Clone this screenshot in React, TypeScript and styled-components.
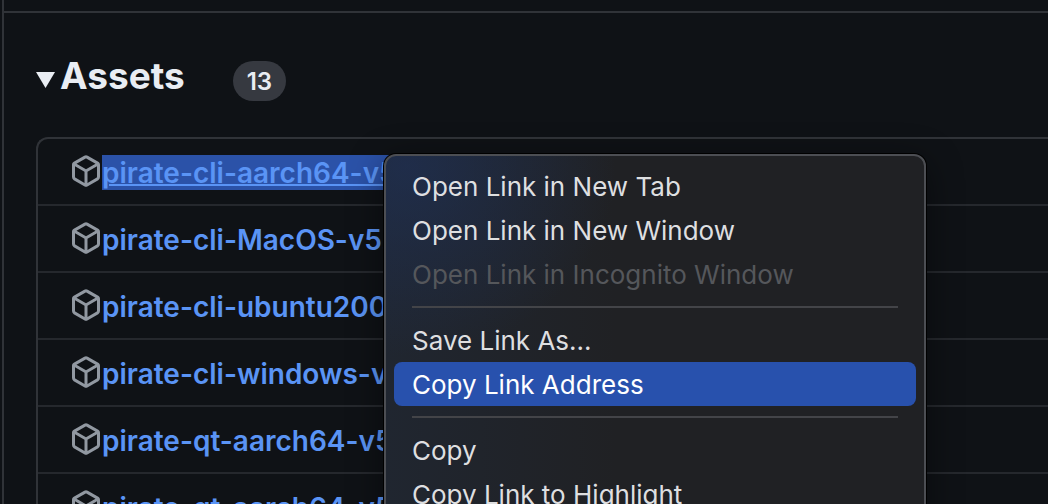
import React from "react";
import styled, { createGlobalStyle } from "styled-components";

const sans = `Inter, "Liberation Sans", sans-serif`;

const GlobalStyle = createGlobalStyle`
  *, *::before, *::after { box-sizing: border-box; }
  html, body { margin: 0; background: #0f1216; }
  body { font-family: ${sans}; overflow: hidden; }
`;

const Page = styled.main`
  position: relative;
  height: 100vh;
  overflow: hidden;
  padding-left: 2px;
  background: #0f1216;
`;

const ReleaseCard = styled.section`
  min-height: 100%;
  border-left: 2px solid #303338;
  padding-top: 11px;
`;

const CardFooter = styled.div`
  border-top: 2px solid #303338;
  padding: 39px 0 0 32px;
`;

const AssetsHeader = styled.header`
  display: flex;
  align-items: center;
  height: 48px;
  margin-bottom: 37px;
`;

const Disclosure = styled.button`
  display: flex;
  align-items: center;
  gap: 5px;
  padding: 0;
  border: 0;
  background: none;
  color: #e9edf3;
  font: inherit;
`;

const Heading = styled.h2`
  margin: 0;
  font-size: 37px;
  font-weight: 700;
  line-height: 48px;
`;

const Triangle = styled.svg`
  display: block;
  width: 19px;
  height: 16px;
  margin-top: 8px;
`;

const Counter = styled.span`
  margin: 10px 0 0 48px;
  padding: 1px 14px 0;
  border-radius: 20px;
  background: #363940;
  color: #e9edf3;
  font-size: 24px;
  font-weight: 600;
  line-height: 39px;
`;

const AssetList = styled.ul`
  margin: 0;
  padding: 0;
  list-style: none;
  border: 2px solid #303338;
  border-right: 0;
  border-radius: 12px 0 0 12px;
`;

const AssetRow = styled.li`
  display: flex;
  align-items: flex-start;
  height: 67px;
  padding: 16px 0 0 32px;
  border-bottom: 2px solid #25282d;
`;

const PackageIcon = styled.svg`
  flex: none;
  width: 32px;
  height: 32px;
  fill: #9198a1;
`;

const AssetLink = styled.a<{ $selected?: boolean }>`
  padding-top: 2px;
  color: #5a94f5;
  font-size: 28px;
  font-weight: 600;
  line-height: 33px;
  white-space: nowrap;
  background: ${(p) => (p.$selected ? "#2b52a8" : "none")};
  text-decoration: ${(p) => (p.$selected ? "underline" : "none")};
  text-decoration-thickness: 2px;
`;

const Menu = styled.div`
  position: absolute;
  top: 154px;
  left: 384px;
  right: 122px;
  padding: 8px;
  border: 2px solid #4c4e53;
  border-radius: 12px;
  background:
    radial-gradient(ellipse 210px 190px at 20px 10px, rgba(31, 49, 88, 0.65), rgba(31, 49, 88, 0)),
    linear-gradient(90deg, #202630, #202124 230px);
  background-color: #202124;
  box-shadow: 0 0 0 1px #000, 0 8px 36px rgba(0, 0, 0, 0.45);
`;

const MenuItem = styled.button<{ $active?: boolean }>`
  display: block;
  width: 100%;
  height: 44px;
  padding: 2px 18px 0;
  border: 0;
  border-radius: 8px;
  background: ${(p) => (p.$active ? "#2851ad" : "none")};
  color: ${(p) => (p.$active ? "#ffffff" : "#dedfe0")};
  font-family: ${sans};
  font-size: 26px;
  line-height: 42px;
  text-align: left;
  white-space: nowrap;

  &:disabled { color: #55575b; }
`;

const Separator = styled.hr`
  height: 2px;
  margin: 10px 18px;
  border: 0;
  background: #434448;
`;

const assets = [
  "pirate-cli-aarch64-v5.",
  "pirate-cli-MacOS-v5.",
  "pirate-cli-ubuntu200",
  "pirate-cli-windows-v5",
  "pirate-qt-aarch64-v5",
  "pirate-qt-aarch64-v5",
];

function Package() {
  return (
    <PackageIcon viewBox="0 0 16 16" aria-hidden="true">
      <path d="m8.878.392 5.25 3.045c.54.314.872.89.872 1.514v6.098a1.75 1.75 0 0 1-.872 1.514l-5.25 3.045a1.75 1.75 0 0 1-1.756 0l-5.25-3.045A1.75 1.75 0 0 1 1 11.049V4.951c0-.624.332-1.201.872-1.514L7.122.392a1.75 1.75 0 0 1 1.756 0ZM7.875 1.69l-4.63 2.685L8 7.133l4.755-2.758-4.63-2.685a.248.248 0 0 0-.25 0ZM2.5 5.677v5.372c0 .09.047.171.125.216l4.625 2.683V8.432Zm6.25 8.271 4.625-2.683a.25.25 0 0 0 .125-.216V5.677L8.75 8.432Z" />
    </PackageIcon>
  );
}

export default function App() {
  return (
    <>
      <GlobalStyle />
      <Page>
        <ReleaseCard>
          <CardFooter>
            <AssetsHeader>
              <Disclosure aria-expanded="true">
                <Triangle viewBox="0 0 19 16" aria-hidden="true">
                  <path d="M0 0H19L9.500 16Z" fill="currentColor" />
                </Triangle>
                <Heading>Assets</Heading>
              </Disclosure>
              <Counter>13</Counter>
            </AssetsHeader>
            <AssetList>
              {assets.map((name, i) => (
                <AssetRow key={i}>
                  <Package />
                  <AssetLink href="#" $selected={i === 0}>{name}</AssetLink>
                </AssetRow>
              ))}
            </AssetList>
          </CardFooter>
        </ReleaseCard>
        <Menu role="menu">
          <MenuItem role="menuitem">Open Link in New Tab</MenuItem>
          <MenuItem role="menuitem">Open Link in New Window</MenuItem>
          <MenuItem role="menuitem" disabled>Open Link in Incognito Window</MenuItem>
          <Separator />
          <MenuItem role="menuitem">Save Link As...</MenuItem>
          <MenuItem role="menuitem" $active>Copy Link Address</MenuItem>
          <Separator />
          <MenuItem role="menuitem">Copy</MenuItem>
          <MenuItem role="menuitem">Copy Link to Highlight</MenuItem>
        </Menu>
      </Page>
    </>
  );
}
